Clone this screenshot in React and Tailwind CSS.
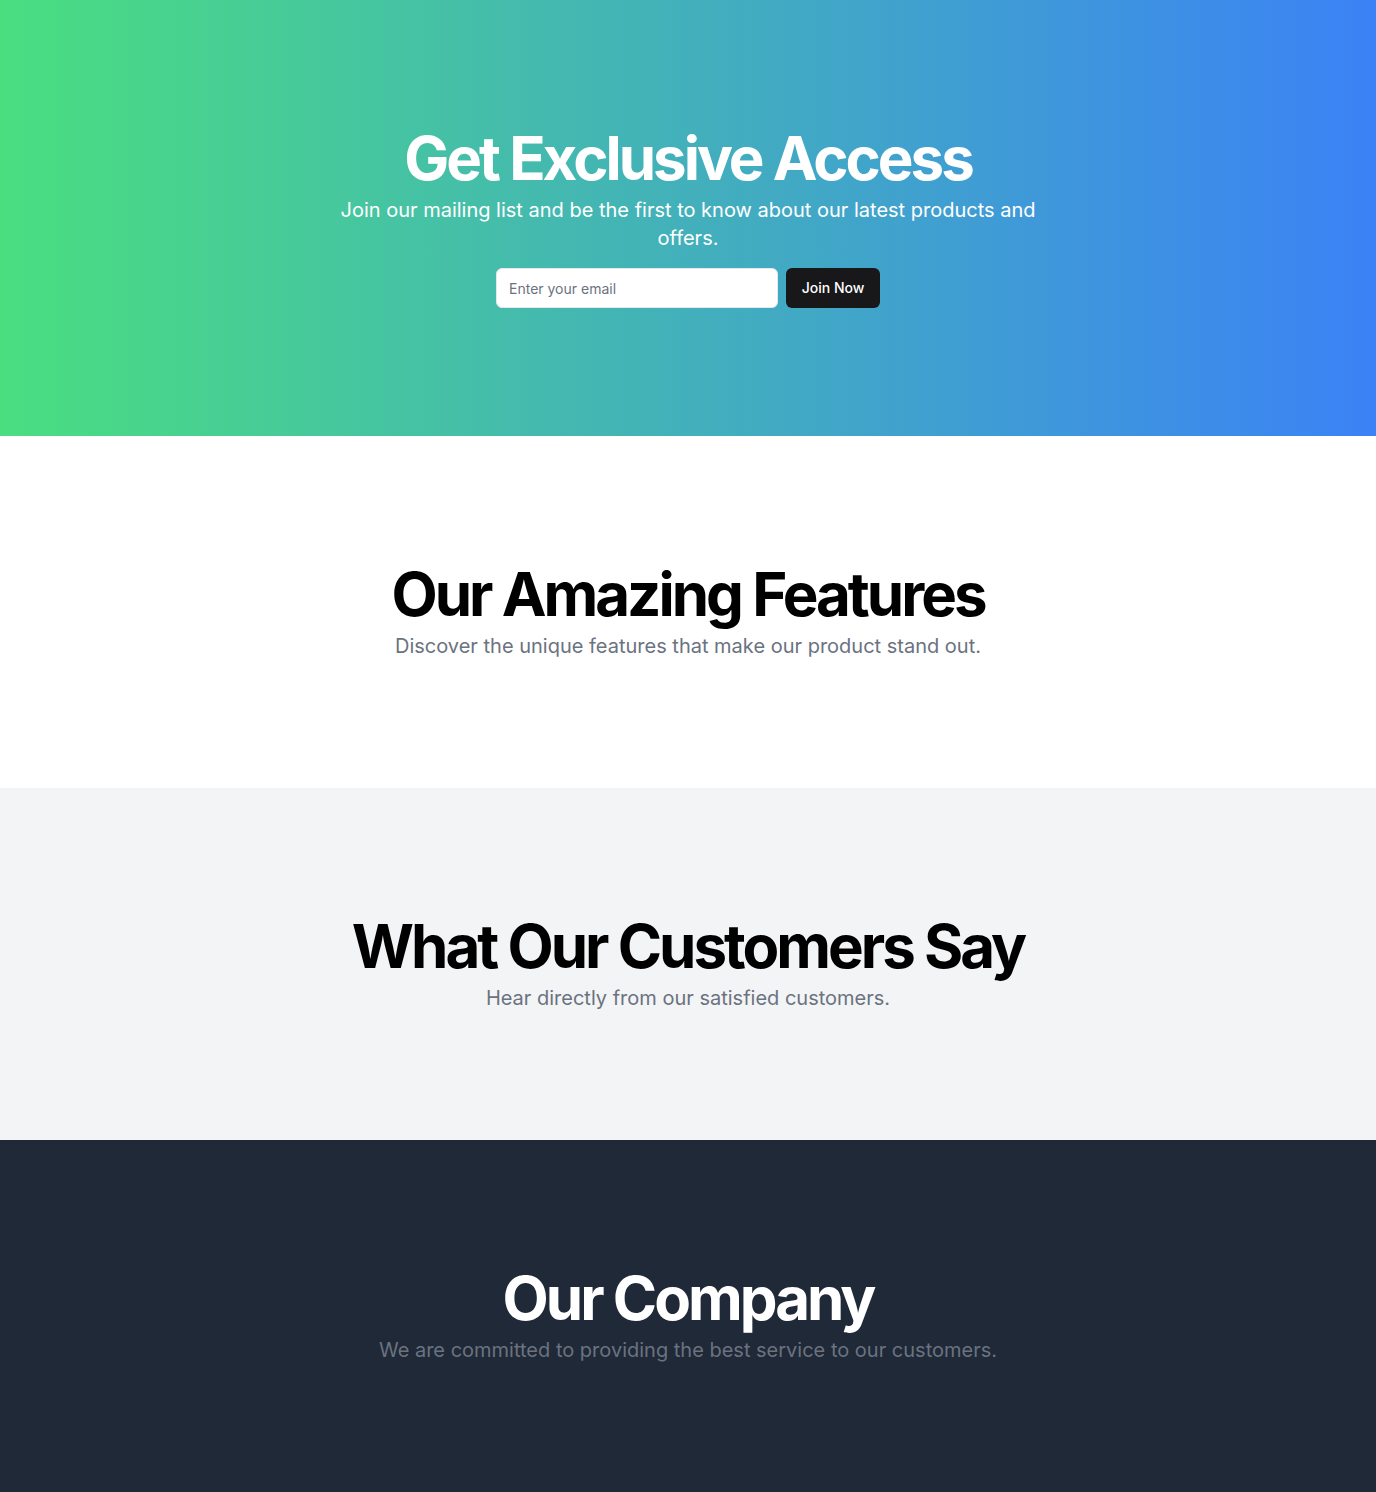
export default function App() {
  return (
    <div className="min-h-screen font-['Inter',sans-serif]">
      <section className="w-full py-32 bg-[linear-gradient(to_right,#4ade80,#3b82f6)]">
        <div className="px-6">
          <div className="flex flex-col items-center space-y-4 text-center">
            <div className="space-y-2">
              <h1 className="text-6xl/none font-bold tracking-tighter text-white">Get Exclusive Access</h1>
              <p className="mx-auto max-w-[700px] text-xl text-white">
                Join our mailing list and be the first to know about our latest products and offers.
              </p>
            </div>
            <form className="w-full max-w-sm flex gap-2" onSubmit={(e) => e.preventDefault()}>
              <input
                type="email"
                placeholder="Enter your email"
                className="flex-1 min-w-0 h-10 rounded-md border border-[#e5e7eb] bg-white px-3 text-sm text-[#111827] placeholder-[#6b7280] outline-none"
              />
              <button type="submit" className="w-[94px] h-10 rounded-md bg-[#18181b] text-white text-sm font-medium">
                Join Now
              </button>
            </form>
          </div>
        </div>
      </section>

      <section className="w-full py-32 bg-white">
        <div className="px-6 flex flex-col items-center text-center space-y-2">
          <h2 className="text-6xl/none font-bold tracking-tighter text-black">Our Amazing Features</h2>
          <p className="max-w-[700px] text-xl text-[#6b7280]">
            Discover the unique features that make our product stand out.
          </p>
        </div>
      </section>

      <section className="w-full py-32 bg-[#f3f4f6]">
        <div className="px-6 flex flex-col items-center text-center space-y-2">
          <h2 className="text-6xl/none font-bold tracking-tighter text-black">What Our Customers Say</h2>
          <p className="max-w-[700px] text-xl text-[#6b7280]">Hear directly from our satisfied customers.</p>
        </div>
      </section>

      <section className="w-full py-32 bg-[#1f2937]">
        <div className="px-6 flex flex-col items-center text-center space-y-2">
          <h2 className="text-6xl/none font-bold tracking-tighter text-white">Our Company</h2>
          <p className="max-w-[700px] text-xl text-[#6b7280]">
            We are committed to providing the best service to our customers.
          </p>
        </div>
      </section>
    </div>
  )
}
